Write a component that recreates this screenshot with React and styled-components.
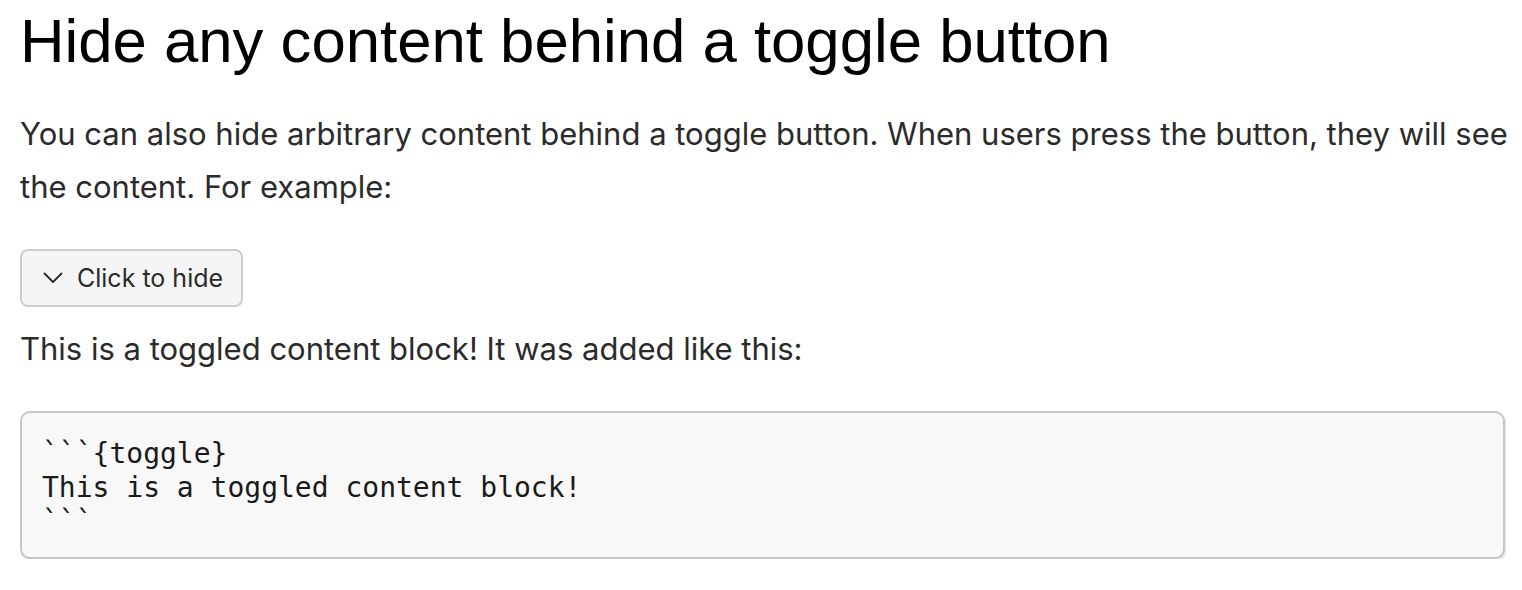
import React from 'react'
import styled, { createGlobalStyle } from 'styled-components'

const GlobalStyle = createGlobalStyle`
  body {
    margin: 0;
    background: #ffffff;
  }
`

const Page = styled.div`
  padding: 5px 8px 0 20px;
  font-family: Inter, "Liberation Sans", sans-serif;
  color: #2b2b2b;
`

const Heading = styled.h1`
  margin: 0 0 30px 0;
  font-family: "Liberation Sans", Arial, sans-serif;
  font-weight: 400;
  font-size: 61.7px;
  line-height: 72px;
  color: #000;
`

const Text = styled.p`
  margin: 0 0 ${p => p.gap || 0}px 0;
  font-size: 31px;
  line-height: 53px;
`

const ToggleButton = styled.button`
  display: inline-flex;
  align-items: center;
  gap: 14px;
  height: 58px;
  padding: 0 18px 0 21px;
  margin-bottom: 15px;
  background: #f5f5f5;
  border: 2px solid #cccccc;
  border-radius: 8px;
  font-family: Inter, "Liberation Sans", sans-serif;
  font-size: 25px;
  color: #2b2b2b;
`

const CodeBlock = styled.pre`
  margin: 36px 9px 0 0;
  padding: 24px 20px 18px 20px;
  background: #f8f8f8;
  border: 2px solid #c6c6c6;
  border-radius: 10px;
  box-shadow: 1px 2px 2px rgba(0, 0, 0, 0.12);
  font-family: "DejaVu Sans Mono", monospace;
  font-size: 28px;
  line-height: 34px;
  color: #1a1a1a;
`

const Chevron = () => (
  <svg width="20" height="12" viewBox="0 0 20 12" fill="none">
    <path d="M1.5 1.5 L10 10 L18.5 1.5" stroke="#2b2b2b" strokeWidth="1.8" strokeLinecap="round" strokeLinejoin="round" />
  </svg>
)

export default function App() {
  return (
    <Page>
      <GlobalStyle />
      <Heading>Hide any content behind a toggle button</Heading>
      <Text gap={36}>
        You can also hide arbitrary content behind a toggle button. When users press the button, they will see
        the content. For example:
      </Text>
      <ToggleButton>
        <Chevron />
        Click to hide
      </ToggleButton>
      <Text>This is a toggled content block! It was added like this:</Text>
      <CodeBlock>{'```{toggle}\nThis is a toggled content block!\n```'}</CodeBlock>
    </Page>
  )
}
